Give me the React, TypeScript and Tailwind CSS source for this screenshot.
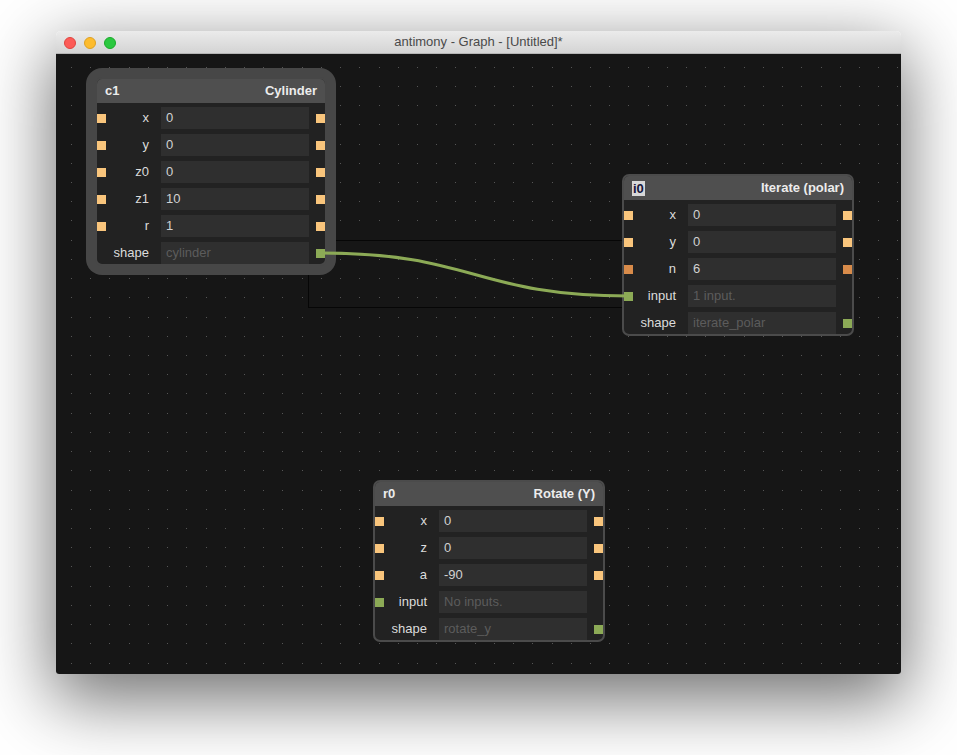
import React from 'react';

type Port = 'light' | 'dark' | 'green' | null;
type Row = { label: string; value: string; placeholder?: boolean; left: Port; right: Port };

const portColor: Record<string, string> = {
  light: 'bg-[#f9c57c]',
  dark: 'bg-[#d88b4a]',
  green: 'bg-[#8caa56]',
};

function PortDot({ kind }: { kind: Port }) {
  if (!kind) return <div className="w-[9px] h-[9px] shrink-0" />;
  return <div className={`w-[9px] h-[9px] shrink-0 ${portColor[kind]}`} />;
}

function NodeBox({ id, title, rows, border, editing }: { id: string; title: string; rows: Row[]; border: string; editing?: boolean }) {
  return (
    <div className={`w-[232px] rounded-[7px] overflow-hidden border-2 bg-[#222222] ${border}`}>
      <div className="h-[24px] bg-[#4f4f4f] flex items-center justify-between pl-[8px] pr-[8px] text-[13px] font-bold text-[#ececec]">
        {editing ? (
          <span className="bg-[#d8d8d8] text-[#14143a] px-[1px] leading-[15px]">{id}</span>
        ) : (
          <span>{id}</span>
        )}
        <span>{title}</span>
      </div>
      <div className="flex flex-col gap-[5px] pt-[4px]">
        {rows.map((r) => (
          <div key={r.label} className="flex items-center h-[22px]">
            <PortDot kind={r.left} />
            <div className="w-[43px] text-right text-[13px] text-[#dcdcdc]">{r.label}</div>
            <div className={`ml-[12px] w-[148px] h-[22px] bg-[#2f2f2f] flex items-center pl-[5px] text-[13px] ${r.placeholder ? 'text-[#5c5c5c]' : 'text-[#d2d2d2]'}`}>
              {r.value}
            </div>
            <div className="ml-[7px]">
              <PortDot kind={r.right} />
            </div>
          </div>
        ))}
      </div>
    </div>
  );
}

const cylinderRows: Row[] = [
  { label: 'x', value: '0', left: 'light', right: 'light' },
  { label: 'y', value: '0', left: 'light', right: 'light' },
  { label: 'z0', value: '0', left: 'light', right: 'light' },
  { label: 'z1', value: '10', left: 'light', right: 'light' },
  { label: 'r', value: '1', left: 'light', right: 'light' },
  { label: 'shape', value: 'cylinder', placeholder: true, left: null, right: 'green' },
];

const iterateRows: Row[] = [
  { label: 'x', value: '0', left: 'light', right: 'light' },
  { label: 'y', value: '0', left: 'light', right: 'light' },
  { label: 'n', value: '6', left: 'dark', right: 'dark' },
  { label: 'input', value: '1 input.', placeholder: true, left: 'green', right: null },
  { label: 'shape', value: 'iterate_polar', placeholder: true, left: null, right: 'green' },
];

const rotateRows: Row[] = [
  { label: 'x', value: '0', left: 'light', right: 'light' },
  { label: 'z', value: '0', left: 'light', right: 'light' },
  { label: 'a', value: '-90', left: 'light', right: 'light' },
  { label: 'input', value: 'No inputs.', placeholder: true, left: 'green', right: null },
  { label: 'shape', value: 'rotate_y', placeholder: true, left: null, right: 'green' },
];

function Dots() {
  const dots: React.ReactNode[] = [];
  for (let j = 0; j < 33; j++) {
    for (let i = 0; i < 44; i++) {
      const x = Math.round(15 + i * 19.22);
      const y = Math.round(12.7 + j * 19.22);
      dots.push(<rect key={`${i}-${j}`} x={x} y={y} width={1} height={1} fill="#565656" />);
    }
  }
  return (
    <svg className="absolute inset-0" width={845} height={620}>
      {dots}
      <rect x={252.5} y={186.5} width={400} height={67} fill="none" stroke="#060606" strokeWidth={1} />
    </svg>
  );
}

export default function App() {
  return (
    <div className="min-h-screen bg-white pt-[31px] pl-[56px] font-['Liberation_Sans',Arial,sans-serif]">
      <div className="w-[845px] rounded-t-[5px] rounded-b-[3px] shadow-[0_22px_70px_4px_rgba(0,0,0,0.56)] overflow-hidden">
        <div className="h-[23px] bg-gradient-to-b from-[#ebebeb] to-[#d4d4d4] border-b border-[#b5b5b5] relative flex items-center justify-center">
          <div className="absolute left-[8px] top-[6px] flex gap-[8px]">
            <span className="w-[12px] h-[12px] rounded-full bg-[#fc5b57] border border-[#e0443e]" />
            <span className="w-[12px] h-[12px] rounded-full bg-[#fdbc2e] border border-[#dea123]" />
            <span className="w-[12px] h-[12px] rounded-full bg-[#2bc840] border border-[#1aab29]" />
          </div>
          <span className="text-[13px] text-[#4a4a4a]">antimony - Graph - [Untitled]*</span>
        </div>
        <div className="relative h-[620px] bg-[#161616]">
          <Dots />
          <div className="absolute left-[30px] top-[14px] p-[9px] rounded-[16px] bg-[#474747]">
            <NodeBox id="c1" title="Cylinder" rows={cylinderRows} border="border-[#474747]" />
          </div>
          <div className="absolute left-[566px] top-[120px]">
            <NodeBox id="i0" title="Iterate (polar)" rows={iterateRows} border="border-[#4b4b4b]" editing />
          </div>
          <div className="absolute left-[317px] top-[426px]">
            <NodeBox id="r0" title="Rotate (Y)" rows={rotateRows} border="border-[#4b4b4b]" />
          </div>
          <svg className="absolute inset-0 pointer-events-none" width={845} height={620}>
            <path d="M265 199 C419 199 419 242 573 242" fill="none" stroke="#8caa56" strokeWidth={3} />
          </svg>
        </div>
      </div>
    </div>
  );
}
